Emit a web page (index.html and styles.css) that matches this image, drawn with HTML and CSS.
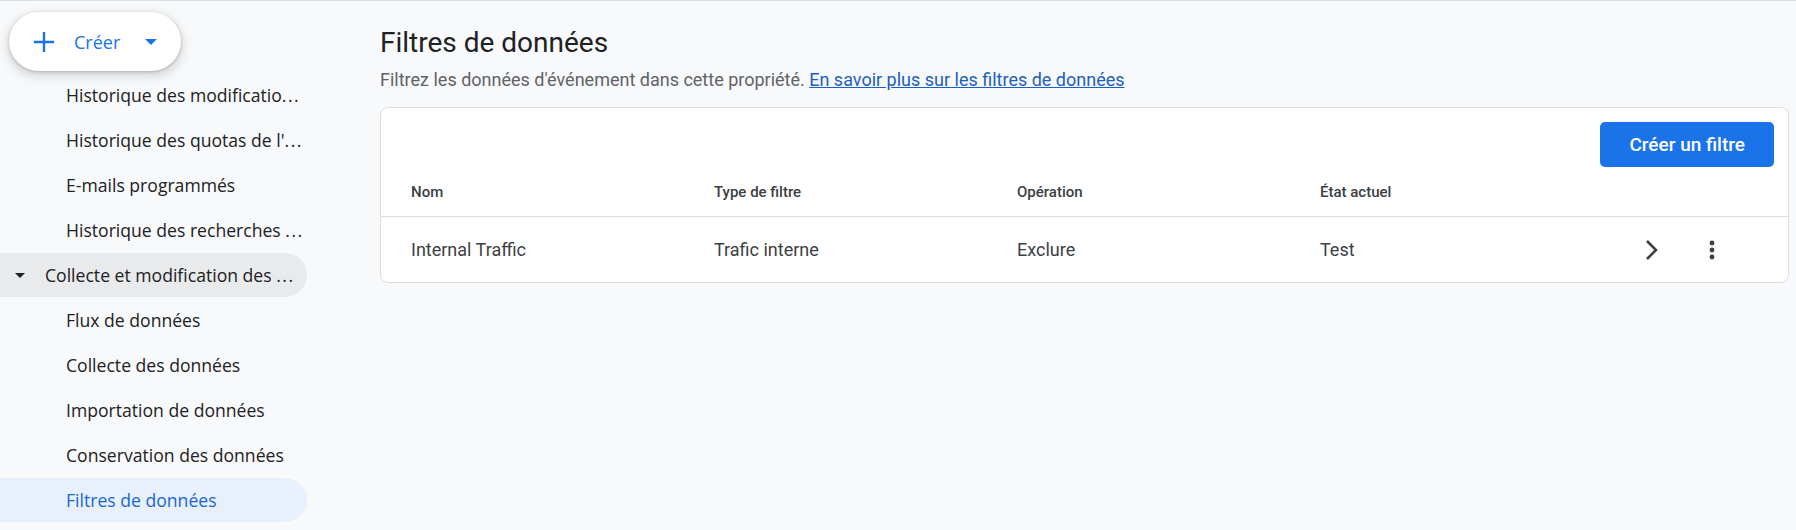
FILE: index.html
```html
<!DOCTYPE html>
<html lang="fr">
<head>
    <meta charset="UTF-8">
    <meta name="viewport" content="width=device-width, initial-scale=1.0">
    <title>Filtres de données</title>
    <link rel="stylesheet" href="styles.css">
</head>
<body>
    <div class="page">
        <aside class="sidebar">
            <button class="create-btn">
                <svg class="plus" width="24" height="24" viewBox="0 0 24 24"><path d="M12 1v22M1 12h22" stroke="#1a73e8" stroke-width="2.6" fill="none"/></svg>
                <span>Créer</span>
                <svg class="drop" width="12" height="6" viewBox="0 0 12 6"><path d="M0 0h12L6 6z" fill="#1a73e8"/></svg>
            </button>

            <ul class="nav">
                <li class="nav-item sub">Historique des modificatio<span class="dots">...</span></li>
                <li class="nav-item sub">Historique des quotas de l'<span class="dots">...</span></li>
                <li class="nav-item sub">E-mails programmés</li>
                <li class="nav-item sub">Historique des recherches&nbsp;<span class="dots">...</span></li>
                <li class="nav-item group">
                    <svg class="caret" width="10" height="5" viewBox="0 0 10 5"><path d="M0 0h10L5 5z" fill="#202124"/></svg>
                    <span>Collecte et modification des&nbsp;<span class="dots">...</span></span>
                </li>
                <li class="nav-item sub">Flux de données</li>
                <li class="nav-item sub">Collecte des données</li>
                <li class="nav-item sub">Importation de données</li>
                <li class="nav-item sub">Conservation des données</li>
                <li class="nav-item sub active">Filtres de données</li>
            </ul>
        </aside>

        <main class="content">
            <h1>Filtres de données</h1>
            <p class="intro">Filtrez les données d'événement dans cette propriété. <a href="#">En savoir plus sur les filtres de données</a></p>

            <div class="card">
                <div class="card-top">
                    <button class="primary-btn">Créer un filtre</button>
                </div>
                <div class="row head">
                    <div class="cell">Nom</div>
                    <div class="cell">Type de filtre</div>
                    <div class="cell">Opération</div>
                    <div class="cell">État actuel</div>
                </div>
                <div class="row">
                    <div class="cell">Internal Traffic</div>
                    <div class="cell">Trafic interne</div>
                    <div class="cell">Exclure</div>
                    <div class="cell">Test</div>
                    <div class="actions">
                        <span class="icon-btn">
                            <svg width="14" height="22" viewBox="0 0 14 22"><path d="M2 2l9 9-9 9" stroke="#3c4043" stroke-width="2.6" fill="none"/></svg>
                        </span>
                        <span class="icon-btn">
                            <svg width="6" height="22" viewBox="0 0 6 22"><circle cx="3" cy="4" r="2.4" fill="#3c4043"/><circle cx="3" cy="11" r="2.4" fill="#3c4043"/><circle cx="3" cy="18" r="2.4" fill="#3c4043"/></svg>
                        </span>
                    </div>
                </div>
            </div>
        </main>
    </div>
</body>
</html>
```

FILE: styles.css
```css
* {
    margin: 0;
    padding: 0;
    box-sizing: border-box;
}

body {
    background-color: #f8f9fa;
    font-family: Roboto, "Liberation Sans", sans-serif;
    color: #202124;
    border-top: 1px solid #dadce0;
}

.page {
    display: flex;
}

/* Sidebar */
.sidebar {
    width: 307px;
    flex-shrink: 0;
    padding-top: 11px;
}

.create-btn {
    display: flex;
    align-items: center;
    width: 172px;
    height: 59px;
    margin-left: 9px;
    padding-left: 24px;
    border: none;
    border-radius: 30px;
    background-color: #fff;
    box-shadow: 0 1px 3px rgba(60, 64, 67, 0.3), 0 4px 8px 3px rgba(60, 64, 67, 0.15);
    font-family: "Open Sans", sans-serif;
    font-size: 18px;
    font-weight: 500;
    color: #1a73e8;
    cursor: pointer;
}

.create-btn .plus {
    width: 22px;
    height: 22px;
    margin-right: 19px;
}

.create-btn .drop {
    margin-left: 25px;
}

.nav {
    list-style-type: none;
    margin-top: 2px;
}

.nav-item {
    display: flex;
    align-items: center;
    height: 44px;
    margin-bottom: 1px;
    border-radius: 0 22px 22px 0;
    font-family: "Open Sans", sans-serif;
    font-size: 17.6px;
    font-weight: 500;
    color: #202124;
    white-space: nowrap;
}

.nav-item .dots {
    letter-spacing: 1.5px;
}

.nav-item.sub {
    padding-left: 66px;
}

.nav-item.group {
    padding-left: 15px;
    background-color: #e9eaec;
}

.nav-item .caret {
    margin-right: 20px;
}

.nav-item.active {
    background-color: #e8f0fe;
    color: #1967d2;
}

/* Content */
.content {
    flex: 1;
    padding: 24px 7px 0 73px;
}

.content h1 {
    font-size: 28px;
    font-weight: 400;
    line-height: 36px;
    color: #202124;
}

.intro {
    margin-top: 7px;
    font-size: 18px;
    line-height: 24px;
    color: #5f6368;
}

.intro a {
    color: #1b5fbf;
    text-decoration: underline;
}

.card {
    margin-top: 15px;
    background-color: #fff;
    border: 1px solid #dadce0;
    border-radius: 8px;
}

.card-top {
    display: flex;
    justify-content: flex-end;
    padding: 14px 14px 0 0;
}

.primary-btn {
    height: 45px;
    padding: 0 29px;
    border: none;
    border-radius: 5px;
    background-color: #1a73e8;
    color: #fff;
    font-family: Roboto, sans-serif;
    font-size: 19px;
    font-weight: 500;
    cursor: pointer;
}

.row {
    display: flex;
    align-items: center;
    height: 65px;
    padding-left: 30px;
    font-size: 18px;
    color: #3c4043;
}

.row.head {
    height: 50px;
    font-size: 15px;
    font-weight: 500;
    color: #3c4043;
    border-bottom: 1px solid #dadce0;
}

.cell {
    width: 303px;
    flex-shrink: 0;
}

.actions {
    display: flex;
    align-items: center;
    gap: 20px;
    margin-left: auto;
    margin-right: 56px;
}

.icon-btn {
    display: flex;
    align-items: center;
    justify-content: center;
    width: 40px;
    height: 40px;
    cursor: pointer;
}
```
